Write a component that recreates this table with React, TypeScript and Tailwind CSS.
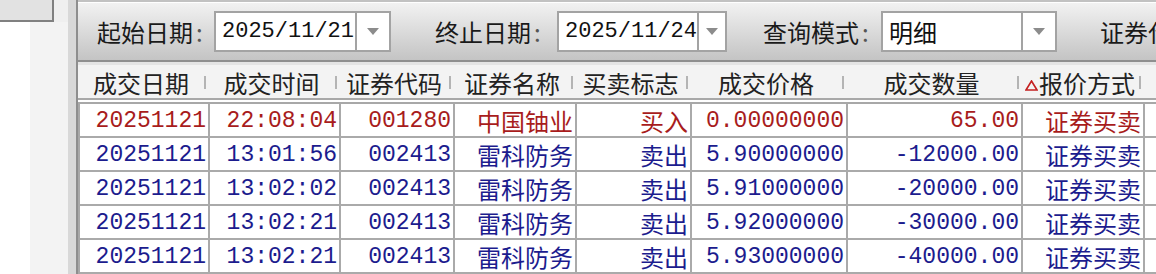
import React from "react";

const columns = [
  { title: "成交日期", width: "w-[130px]" },
  { title: "成交时间", width: "w-[131px]" },
  { title: "证券代码", width: "w-[114px]" },
  { title: "证券名称", width: "w-[122px]" },
  { title: "买卖标志", width: "w-[115px]" },
  { title: "成交价格", width: "w-[156px]" },
  { title: "成交数量", width: "w-[175px]" },
  { title: "报价方式", width: "w-[122px]", sorted: true }
];

const rows = [
  { buy: true, cells: ["20251121", "22:08:04", "001280", "中国铀业", "买入", "0.00000000", "65.00", "证券买卖"] },
  { buy: false, cells: ["20251121", "13:01:56", "002413", "雷科防务", "卖出", "5.90000000", "-12000.00", "证券买卖"] },
  { buy: false, cells: ["20251121", "13:02:02", "002413", "雷科防务", "卖出", "5.91000000", "-20000.00", "证券买卖"] },
  { buy: false, cells: ["20251121", "13:02:21", "002413", "雷科防务", "卖出", "5.92000000", "-30000.00", "证券买卖"] },
  { buy: false, cells: ["20251121", "13:02:21", "002413", "雷科防务", "卖出", "5.93000000", "-40000.00", "证券买卖"] }
];

// columns holding chinese text rather than digits
const cjkCols = [3, 4, 7];

const cjk = "font-['Noto_Sans_CJK_SC',sans-serif]";
const mono = "font-['Liberation_Mono','Noto_Sans_CJK_SC',monospace]";

function Combo({ width, value, isText }: { width: string; value: string; isText?: boolean }) {
  return (
    <div className={`flex h-[41px] ${width} border-2 border-[#a3a3a3] bg-white`}>
      <div
        className={`flex flex-1 items-center pl-[6px] text-[#111] ${
          isText ? `${cjk} text-[24px]` : `${mono} text-[22px]`
        }`}
      >
        {value}
      </div>
      <div className="flex w-[34px] items-center justify-center border-l-2 border-[#a3a3a3]">
        <svg width="12" height="7" viewBox="0 0 12 7">
          <polygon points="0,0 12,0 6,7" fill="#8c8c8c" />
        </svg>
      </div>
    </div>
  );
}

function Label({ width, text }: { width: string; text: string }) {
  return (
    <div className={`${width} shrink-0 ${cjk} text-[24px] leading-none text-[#1a1a1a]`}>
      {text}
      <span className="ml-[3px] text-[#555]">:</span>
    </div>
  );
}

export default function App() {
  return (
    <div className="flex h-[274px] w-[1156px] overflow-hidden bg-white">
      {/* left panel */}
      <div className="flex w-[68px] shrink-0 flex-col">
        <div className="flex h-[22px]">
          <div className="w-[54px] border-r-2 border-b-2 border-[#808080] bg-[#e2e2e2]" />
          <div className="flex-1 bg-[#efefef]" />
        </div>
        <div className="flex flex-1">
          <div className="w-[30px] bg-white" />
          <div className="flex-1 bg-[#f3f3f3]" />
        </div>
      </div>
      <div className="w-[8px] shrink-0 bg-[#d8d8d8]" />
      <div className="w-[2px] shrink-0 bg-[#8e8e8e]" />

      {/* main */}
      <div className="flex min-w-0 flex-1 flex-col">
        <div className="h-[2px] bg-[#c2c2c2]" />
        <div className="h-[2px] bg-white" />
        <div className="flex h-[57px] shrink-0 items-center whitespace-nowrap bg-gradient-to-b from-[#f2f2f2] to-[#c4c4c4] pl-[19px]">
          <Label width="w-[117px]" text="起始日期" />
          <Combo width="w-[177px] shrink-0" value="2025/11/21" />
          <div className="w-[44px] shrink-0" />
          <Label width="w-[122px]" text="终止日期" />
          <Combo width="w-[170px] shrink-0" value="2025/11/24" />
          <div className="w-[36px] shrink-0" />
          <Label width="w-[118px]" text="查询模式" />
          <Combo width="w-[176px] shrink-0" value="明细" isText />
          <div className="w-[43px] shrink-0" />
          <Label width="w-[120px]" text="证券代码" />
        </div>
        <div className="h-[2px] bg-[#8f8f8f]" />
        <div className="h-[4px] bg-[#e4e4e4]" />

        {/* grid */}
        <div className="flex flex-1 flex-col">
          <div className="flex h-[33px] shrink-0 bg-[#f3f3f3]">
            {columns.map(col => (
              <div key={col.title} className={`flex ${col.width} shrink-0 items-center pt-[3px]`}>
                <div className={`flex flex-1 items-center justify-center ${cjk} text-[24px] leading-none text-[#222]`}>
                  {col.sorted && (
                    <svg width="13" height="11" viewBox="0 0 13 11" className="mr-[1px] mt-[6px]">
                      <polygon points="6.5,1 12,10 1,10" fill="none" stroke="#c42020" strokeWidth="1.6" />
                    </svg>
                  )}
                  {col.title}
                </div>
                <div className="mr-[2px] h-[13px] w-[2px] bg-[#b4b4b4]" />
              </div>
            ))}
            <div className="flex-1" />
          </div>
          <div className="h-[2px] bg-[#a8a8a8]" />
          <div className="h-[2px] bg-white" />
          <div className="flex flex-1 flex-col border-t-2 border-l-2 border-[#a8a8a8] bg-white">
            {rows.map((row, i) => (
              <div
                key={i}
                className={`flex h-[34px] shrink-0 border-b-2 border-[#aaaaaa] ${
                  row.buy ? "text-[#a81c1c]" : "text-[#1c1c8e]"
                }`}
              >
                {row.cells.map((cell, j) => (
                  <div
                    key={j}
                    className={`flex ${columns[j].width} shrink-0 items-center justify-end border-r-2 border-[#aaaaaa] pt-[3px] pr-[2px] leading-none ${
                      cjkCols.includes(j) ? `${cjk} text-[24px]` : `${mono} text-[23px]`
                    }`}
                  >
                    {cell}
                  </div>
                ))}
                <div className="flex-1" />
              </div>
            ))}
          </div>
        </div>
      </div>
    </div>
  );
}
